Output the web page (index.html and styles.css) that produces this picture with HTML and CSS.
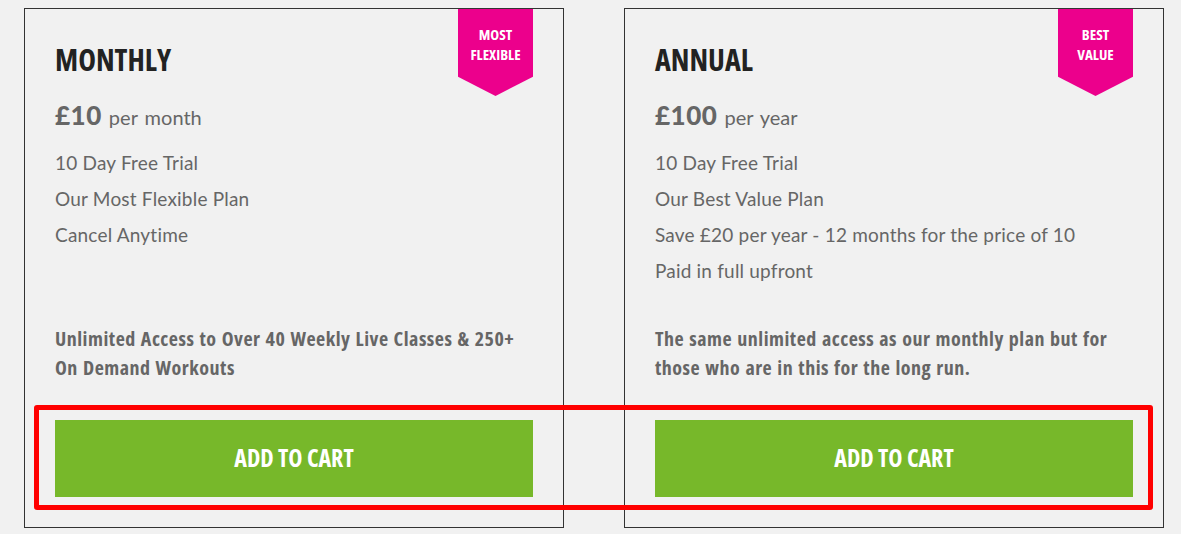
FILE: index.html
```html
<!DOCTYPE html>
<html lang="en">
<head>
    <meta charset="UTF-8">
    <meta name="viewport" content="width=device-width, initial-scale=1.0">
    <title>Membership Plans</title>
    <link rel="stylesheet" href="styles.css">
</head>
<body>
    <div class="plans">
        <div class="plan">
            <div class="badge">MOST<br>FLEXIBLE</div>
            <h2 class="plan-title">MONTHLY</h2>
            <p class="price"><strong>£10</strong> per month</p>
            <ul class="features">
                <li>10 Day Free Trial</li>
                <li>Our Most Flexible Plan</li>
                <li>Cancel Anytime</li>
            </ul>
            <p class="summary">Unlimited Access to Over 40 Weekly Live Classes &amp; 250+ On Demand Workouts</p>
            <button class="cart-btn">ADD TO CART</button>
        </div>

        <div class="plan">
            <div class="badge">BEST<br>VALUE</div>
            <h2 class="plan-title">ANNUAL</h2>
            <p class="price"><strong>£100</strong> per year</p>
            <ul class="features">
                <li>10 Day Free Trial</li>
                <li>Our Best Value Plan</li>
                <li>Save £20 per year - 12 months for the price of 10</li>
                <li>Paid in full upfront</li>
            </ul>
            <p class="summary">The same unlimited access as our monthly plan but for those who are in this for the long run.</p>
            <button class="cart-btn">ADD TO CART</button>
        </div>
    </div>

    <!-- highlight around the buttons -->
    <div class="highlight"></div>
</body>
</html>
```

FILE: styles.css
```css
body {
    margin: 0;
    background-color: #f1f1f1;
    font-family: "Lato", "Open Sans", sans-serif;
}

.plans {
    display: flex;
    gap: 60px;
    padding: 8px 0 0 24px;
}

.plan {
    position: relative;
    display: flex;
    flex-direction: column;
    width: 538px;
    height: 518px;
    box-sizing: content-box;
    border: 1px solid #333;
    padding: 0;
}

.plan > * {
    margin-left: 30px;
    margin-right: 30px;
}

.plan-title,
.summary,
.cart-btn,
.badge {
    font-family: "Open Sans", sans-serif;
    font-stretch: 75%;
    font-weight: 700;
}

.plan-title {
    margin-top: 33px;
    margin-bottom: 0;
    font-size: 30px;
    line-height: 36px;
    color: #222;
}

.price {
    margin-top: 19px;
    margin-bottom: 0;
    font-size: 20px;
    line-height: 36px;
    color: #666;
    word-spacing: 2px;
}

.price strong {
    font-size: 26px;
    font-weight: 900;
    letter-spacing: 0.5px;
}

.features {
    list-style: none;
    margin-top: 10px;
    margin-bottom: 0;
    padding: 0;
}

.features li {
    font-size: 19px;
    line-height: 36px;
    color: #666;
    letter-spacing: 0.2px;
}

.summary {
    margin-top: auto;
    margin-bottom: 0;
    font-size: 20px;
    line-height: 29px;
    letter-spacing: 0.5px;
    word-spacing: 1px;
    color: #666;
}

.cart-btn {
    margin-top: 38px;
    margin-bottom: 30px;
    height: 77px;
    padding: 0 0 3px;
    border: none;
    background-color: #77b82a;
    color: #fff;
    font-size: 24px;
    cursor: pointer;
}

.badge {
    position: absolute;
    top: 0;
    right: 0;
    width: 75px;
    height: 87px;
    padding-top: 15px;
    box-sizing: border-box;
    background-color: #ec008c;
    color: #fff;
    font-size: 15px;
    line-height: 20px;
    text-align: center;
    clip-path: polygon(0 0, 100% 0, 100% 78%, 50% 100%, 0 78%);
}

.highlight {
    position: absolute;
    left: 34px;
    top: 405px;
    width: 1109px;
    height: 95px;
    border: 5px solid #ff0000;
    border-radius: 3px;
}
```
